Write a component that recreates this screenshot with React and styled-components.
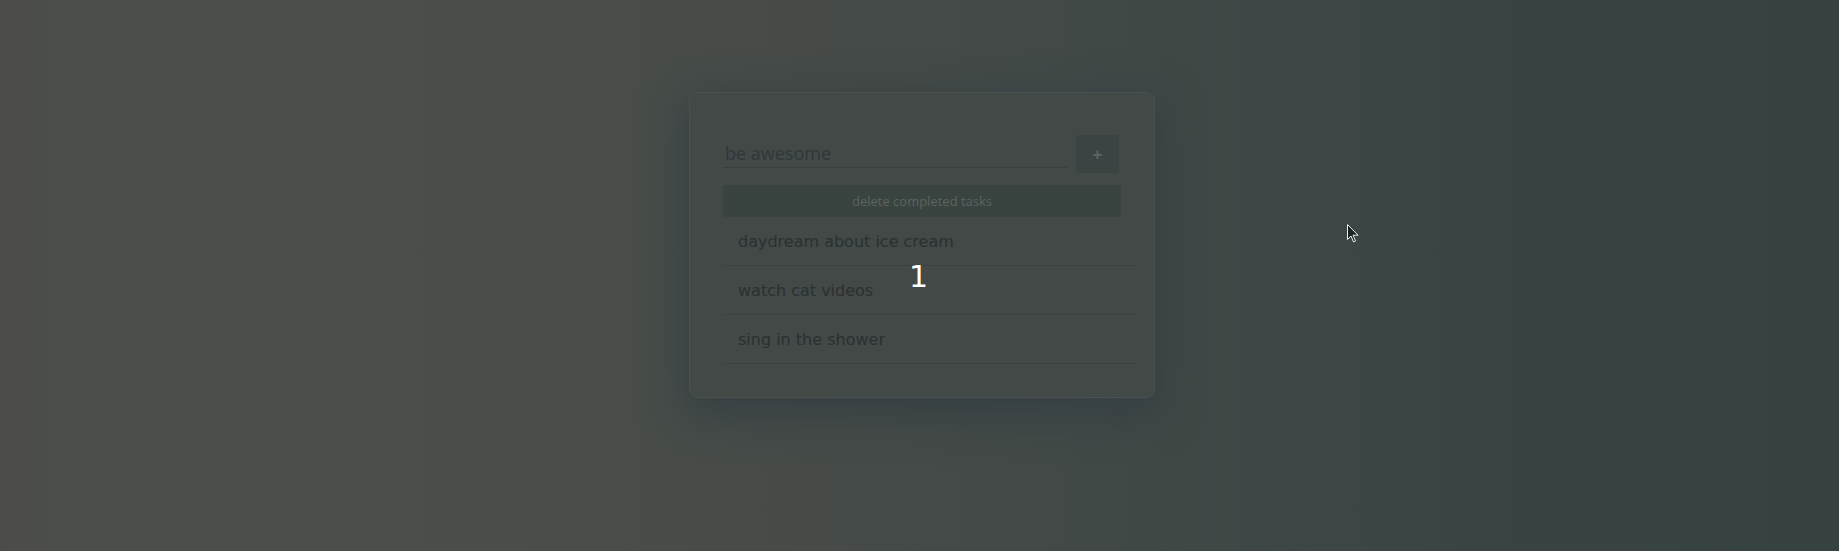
import styled, { createGlobalStyle } from "styled-components";

const GlobalStyle = createGlobalStyle`
  html, body {
    margin: 0;
    padding: 0;
    height: 100%;
  }
  body {
    font-family: "DejaVu Sans", sans-serif;
    overflow: hidden;
  }
`;

const Page = styled.div`
  position: relative;
  width: 100vw;
  height: 100vh;
  box-sizing: border-box;
  padding-top: 92px;
  padding-left: 5px;
  display: flex;
  justify-content: center;
  align-items: flex-start;
  background: linear-gradient(
    90deg,
    #4c4d4a 0%,
    #4a4f4b 12%,
    #494e4a 30%,
    #464b48 45%,
    #434a48 55%,
    #3e4745 68%,
    #394442 82%,
    #364241 100%
  );
`;

const Card = styled.div`
  position: relative;
  width: 466px;
  box-sizing: border-box;
  padding: 42px 20px 33px 33px;
  border-radius: 9px;
  background: #424947;
  border: 1px solid rgba(255, 255, 255, 0.04);
  box-shadow: 0 12px 40px 6px rgba(52, 62, 66, 0.9);
`;

const Form = styled.form`
  display: flex;
  align-items: flex-start;
  gap: 9px;
  width: 396px;
  height: 38px;
`;

const TaskInput = styled.input`
  flex: 1;
  height: 33px;
  box-sizing: border-box;
  padding: 4px 2px 0;
  border: none;
  border-bottom: 1px solid #363f41;
  background: transparent;
  font-family: "Open Sans", sans-serif;
  font-size: 18px;
  color: #2f3537;
  outline: none;

  &::placeholder {
    color: #30373a;
  }
`;

const AddButton = styled.button`
  width: 43px;
  height: 38px;
  border: none;
  border-radius: 4px;
  background: #3b4442;
  color: #59625f;
  font-family: "Open Sans", sans-serif;
  font-weight: 700;
  font-size: 18px;
  line-height: 1;
  cursor: pointer;
`;

const DeleteButton = styled.button`
  display: block;
  width: 398px;
  height: 32px;
  margin-top: 12px;
  border: none;
  border-radius: 3px;
  background: #39433f;
  color: #5b6461;
  font-family: "Open Sans", sans-serif;
  font-size: 13px;
  cursor: pointer;
`;

const TaskList = styled.ul`
  list-style: none;
  margin: 0;
  padding: 0;
  width: 412px;
`;

const TaskItem = styled.li`
  height: 48px;
  display: flex;
  align-items: center;
  padding-left: 15px;
  border-bottom: 1px solid #384244;
  font-family: "DejaVu Sans", sans-serif;
  font-size: 16px;
  color: #2b3031;
`;

const StepMarker = styled.span`
  position: absolute;
  left: 219px;
  top: 169px;
  font-family: "DejaVu Sans", sans-serif;
  font-size: 30px;
  line-height: 30px;
  color: #ffffff;
  pointer-events: none;
`;

const Pointer = styled.svg`
  position: absolute;
  left: 1347px;
  top: 224px;
  width: 12px;
  height: 19px;
`;

const tasks = ["daydream about ice cream", "watch cat videos", "sing in the shower"];

export default function App() {
  return (
    <>
      <GlobalStyle />
      <Page>
        <Card>
          <Form onSubmit={(e) => e.preventDefault()}>
            <TaskInput placeholder="be awesome" />
            <AddButton type="submit">+</AddButton>
          </Form>
          <DeleteButton type="button">delete completed tasks</DeleteButton>
          <TaskList>
            {tasks.map((task) => (
              <TaskItem key={task}>{task}</TaskItem>
            ))}
          </TaskList>
          <StepMarker>1</StepMarker>
        </Card>
        <Pointer viewBox="0 0 12 19">
          <path
            d="M0.5 0.5 L0.5 15.5 L4 12 L6.5 18 L8.5 17 L6 11.2 L11 11.2 Z"
            fill="#1d2222"
            stroke="#e8ecec"
            strokeWidth="1"
            strokeLinejoin="round"
          />
        </Pointer>
      </Page>
    </>
  );
}
